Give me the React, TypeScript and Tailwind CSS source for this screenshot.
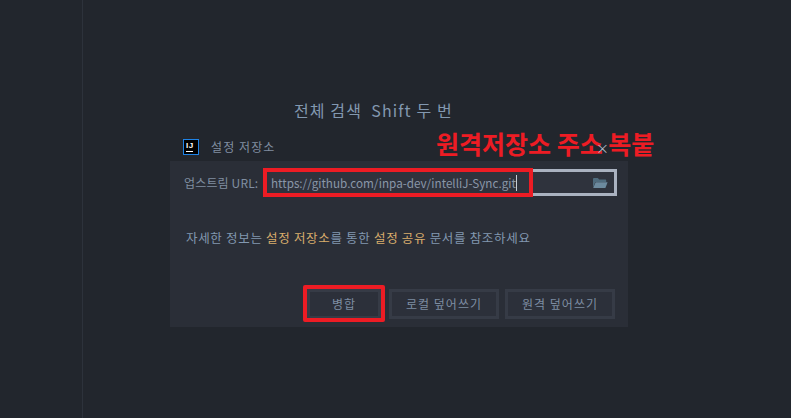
import React from 'react';

const font = 'font-["Noto_Sans_CJK_KR","Liberation_Sans",sans-serif]';

const FolderIcon = () => (
  <svg width="16" height="12" viewBox="0 0 16 12" className="shrink-0">
    <path d="M1 2.2C1 1.5 1.5 1 2.2 1h3.6l1.4 1.4h6c.6 0 1 .4 1 1V5H3.4L1 10.5z" fill="#4f6b7d" />
    <path d="M3.6 5.2H15.6L13.4 11H1.2z" fill="#6c8a9e" />
  </svg>
);

const IdeaLogo = () => (
  <div className="w-[16px] h-[16px] border border-[#1f83e6] bg-black flex flex-col shrink-0">
    <span className='text-white text-[8px] font-bold leading-[9px] font-["Liberation_Sans",sans-serif] tracking-[0.6px] pl-[2px] pt-[1px]'>IJ</span>
    <div className="w-[7px] h-px bg-white ml-[2px] mt-[1px]" />
  </div>
);

const DialogButton = ({ label, wide }: { label: string; wide?: boolean }) => (
  <button
    className={`h-[30px] border-[3px] border-[#363b46] bg-[#2c303a] text-[12px] tracking-[1px] text-[#7e8da2] flex items-center justify-center ${wide ? 'w-[110px]' : 'w-[74px]'}`}
  >
    {label}
  </button>
);

export default function App() {
  return (
    <div className={`${font} relative w-[791px] h-[418px] overflow-hidden bg-[#22262d] flex`}>
      <div className="w-[83px] h-full border-r border-[#2d323b] shrink-0" />

      <div className="flex-1 pl-[87px] pt-[97px] flex flex-col">
        <div className="pl-[124px] h-[36px] text-[16px] leading-[26px] tracking-[1.1px] text-[#8298b0] whitespace-pre">전체 검색  Shift 두 번</div>

        <div className="w-[458px] h-[194px] bg-[#2a2e37] flex flex-col">
          <div className="h-[28px] bg-[#22262d] flex items-center pl-[13px] pr-[19px] gap-[12px]">
            <IdeaLogo />
            <span className="text-[12px] tracking-[1.1px] text-[#808ea1]">설정 저장소</span>
            <span className="relative z-10 ml-auto text-[13px] leading-none text-[#b4bcc8]">×</span>
          </div>

          <div className="flex items-center h-[27px] mt-[8px] pl-[14px] pr-[11px]">
            <span className="w-[80px] text-[12px] tracking-[0.15px] text-[#808ea1] whitespace-nowrap">업스트림 URL:</span>
            <div className="flex-1 h-[27px] border-[3px] border-[#aab2c0] bg-[#2f333d] flex items-center pl-[4px] pr-[6px]">
              <span className="text-[11.7px] text-[#8a97a9] whitespace-nowrap">https://github.com/inpa-dev/intelliJ-Sync.git</span>
              <span className="w-px h-[16px] bg-[#c5ccd6]" />
              <span className="ml-auto"><FolderIcon /></span>
            </div>
          </div>

          <p className="mt-[33px] pl-[16px] text-[12.5px] leading-[18px] tracking-[0.68px] text-[#8298b0] whitespace-nowrap">
            자세한 정보는 <span className="text-[#d9ad6c]">설정 저장소</span>를 통한 <span className="text-[#d9ad6c]">설정 공유</span> 문서를 참조하세요
          </p>

          <div className="mt-auto mb-[8px] flex justify-end gap-[6px] pr-[13px]">
            <div className="mr-[2px]"><DialogButton label="병합" /></div>
            <DialogButton label="로컬 덮어쓰기" wide />
            <DialogButton label="원격 덮어쓰기" wide />
          </div>
        </div>
      </div>

      {/* annotations drawn over the screenshot */}
      <div className="absolute left-[263px] top-[168px] w-[270px] h-[29px] border-[4px] border-[#ed1c24]" />
      <div className="absolute left-[303px] top-[285px] w-[82px] h-[37px] border-[4px] rounded-[2px] border-[#ed1c24]" />
      <div className="absolute left-[436px] top-[125px] text-[25px] leading-[36px] font-bold text-[#ed1c24] whitespace-nowrap">원격저장소 주소 복붙</div>
    </div>
  );
}
